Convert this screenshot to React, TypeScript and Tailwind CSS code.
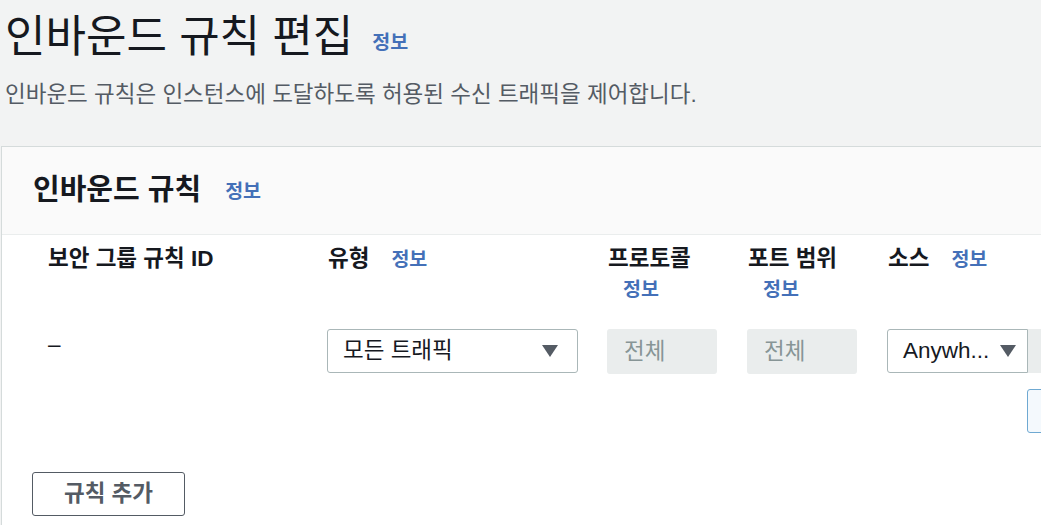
const font = { fontFamily: '"Liberation Sans", "Noto Sans CJK KR", sans-serif' }

function Info({ className = "" }: { className?: string }) {
  return <span className={`text-[19.5px] font-bold text-[#4470b8] ${className}`}>정보</span>
}

function Caret() {
  return (
    <svg width="16" height="12" viewBox="0 0 16 12" className="shrink-0">
      <path d="M0 0h16L8 12z" fill="#545b64" />
    </svg>
  )
}

export default function App() {
  return (
    <div style={font} className="w-[1041px] h-[525px] overflow-hidden bg-[#f2f3f3] text-[#16191f]">
      {/* page title */}
      <div className="pl-[5px] pt-[11px]">
        <div className="flex items-center gap-[19px]">
          <h1 className="text-[44px] leading-[52px]">인바운드 규칙 편집</h1>
          <Info className="mt-[12px]" />
        </div>
        <p className="mt-[17px] text-[22.5px] leading-[30px] text-[#545b64]">
          인바운드 규칙은 인스턴스에 도달하도록 허용된 수신 트래픽을 제어합니다.
        </p>
      </div>

      {/* card */}
      <div className="mt-[36px] ml-[1px] w-[1200px] bg-white border-l border-t border-[#d5dbdb]">
        <div className="h-[88px] bg-[#fafafa] border-b border-[#eaeded] flex items-center px-[31px] gap-[24px]">
          <h2 className="text-[29px] font-bold">인바운드 규칙</h2>
          <Info className="mt-[2px]" />
        </div>

        <div className="pl-[46px] pt-[9px]">
          <div className="flex items-start text-[22.5px] font-bold leading-[30px]">
            <div className="w-[280px]">보안 그룹 규칙 ID</div>
            <div className="w-[280px] flex items-center gap-[22px]">유형 <Info /></div>
            <div className="w-[140px] flex flex-col">
              <span>프로토콜</span>
              <Info className="pl-[15px]" />
            </div>
            <div className="w-[140px] flex flex-col">
              <span>포트 범위</span>
              <Info className="pl-[15px]" />
            </div>
            <div className="flex items-center gap-[22px]">소스 <Info /></div>
          </div>

          <div className="flex mt-[25px] text-[22.5px]">
            <div className="w-[280px] -mt-[1px]">–</div>
            <div className="w-[280px] -ml-[1px]">
              <div className="w-[251px] h-[44px] border border-[#aab7b8] rounded-[3px] flex items-center justify-between pl-[15px] pr-[19px]">
                <span>모든 트래픽</span>
                <Caret />
              </div>
            </div>
            <div className="w-[140px]">
              <div className="w-[110px] h-[45px] bg-[#eaeded] rounded-[3px] flex items-center pl-[17px] text-[#879596]">전체</div>
            </div>
            <div className="w-[140px]">
              <div className="w-[110px] h-[45px] bg-[#eaeded] rounded-[3px] flex items-center pl-[17px] text-[#879596]">전체</div>
            </div>
            <div>
              <div className="flex">
                <div className="w-[141px] h-[44px] border border-[#aab7b8] rounded-l-[3px] flex items-center justify-between pl-[15px] pr-[11px]">
                  <span>Anywh...</span>
                  <Caret />
                </div>
                <div className="w-[120px] h-[44px] bg-[#eaeded]" />
              </div>
              <div className="ml-[140px] mt-[16px] w-[120px] h-[44px] border border-[#6fa9d2] bg-[#f4f9fd] rounded-[3px]" />
            </div>
          </div>
        </div>

        <div className="pl-[30px] pt-[39px] pb-[20px]">
          <button className="w-[153px] h-[44px] border border-[#545b64] rounded-[3px] text-[22.5px] font-bold text-[#545b64]">
            규칙 추가
          </button>
        </div>
      </div>
    </div>
  )
}
